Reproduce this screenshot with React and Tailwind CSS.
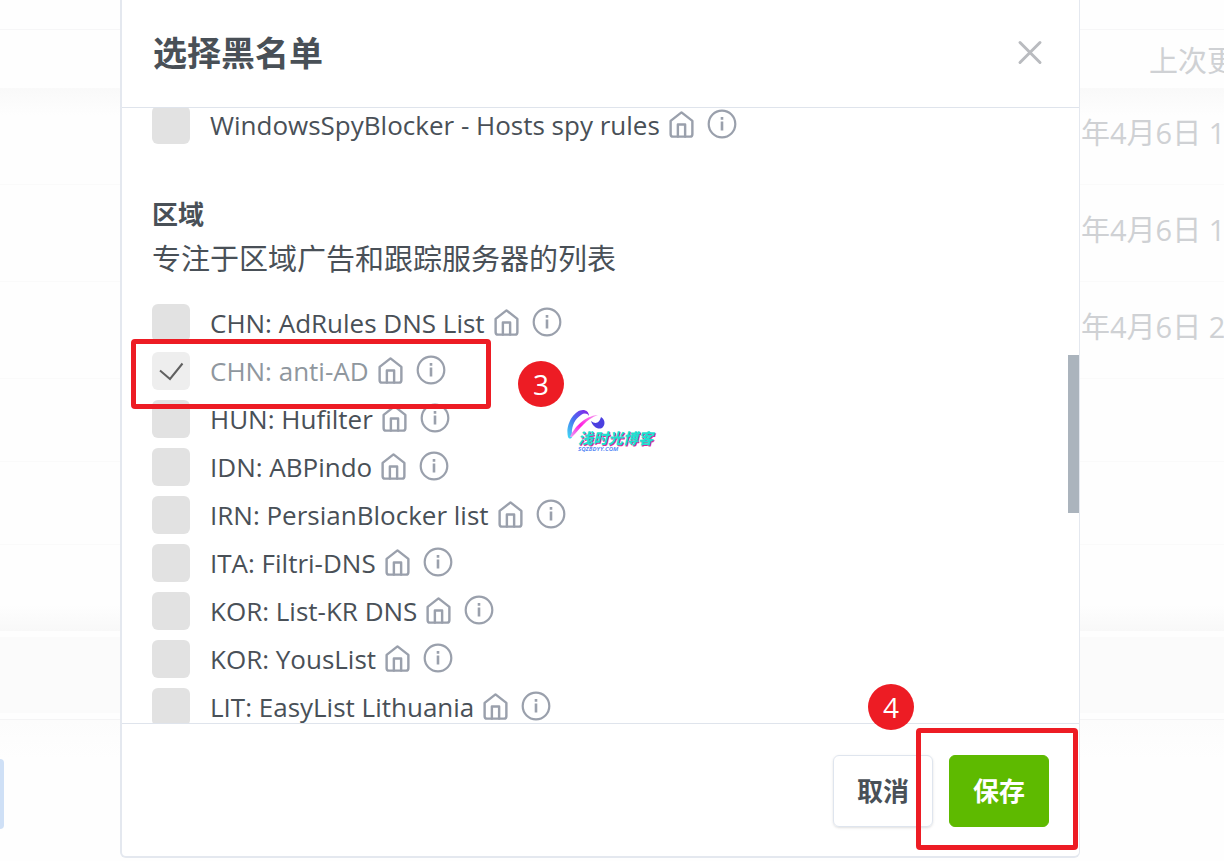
import React from "react";

const filters = [
  { name: "CHN: AdRules DNS List" },
  { name: "CHN: anti-AD", added: true },
  { name: "HUN: Hufilter" },
  { name: "IDN: ABPindo" },
  { name: "IRN: PersianBlocker list" },
  { name: "ITA: Filtri-DNS" },
  { name: "KOR: List-KR DNS" },
  { name: "KOR: YousList" },
  { name: "LIT: EasyList Lithuania" },
];

const dates = ["年4月6日 1", "年4月6日 1", "年4月6日 2"];

function HomeIcon() {
  return (
    <svg className="size-[29px]" viewBox="0 0 24 24" fill="none" stroke="currentColor" strokeWidth="2" strokeLinecap="round" strokeLinejoin="round">
      <path d="M3 9l9-7 9 7v11a2 2 0 0 1-2 2H5a2 2 0 0 1-2-2z" />
      <path d="M9 22V12h6v10" />
    </svg>
  );
}

function InfoIcon() {
  return (
    <svg className="size-[30px]" viewBox="0 0 30 30" fill="none" stroke="currentColor" strokeWidth="2.2">
      <circle cx="15" cy="15" r="13.3" />
      <path strokeWidth="2.6" d="M15 12.500v9M15 8v2.800" />
    </svg>
  );
}

function FilterRow({ id, name, added, first, children }) {
  return (
    <div className={first ? "flex h-9 items-end" : "relative flex h-12 items-center"}>
      <label htmlFor={id} className="flex h-[38px] items-center">
        <span className="grid size-[38px] shrink-0">
          <input
            id={id}
            type="checkbox"
            defaultChecked={added}
            disabled={added}
            className="col-start-1 row-start-1 size-[38px] appearance-none rounded-md bg-[#e2e2e2] disabled:bg-[#eeeeee]"
          />
          {added && (
            <svg className="col-start-1 row-start-1 size-[38px]" viewBox="0 0 38 38" fill="none" stroke="#606060" strokeWidth="2">
              <path d="M8 18.500l10 8.500L30.500 11.500" />
            </svg>
          )}
        </span>
        <span className={added ? "ml-5 text-[#8f979e]" : "ml-5 text-[#495057]"}>{name}</span>
      </label>
      <span className="ml-[7px] flex h-[38px] items-center gap-[11px] pb-[2px] text-[#9aa0ac]">
        <a href="#home" aria-label={name}>
          <HomeIcon />
        </a>
        <a href="#info" aria-label={name}>
          <InfoIcon />
        </a>
      </span>
      {children}
    </div>
  );
}

function Badge({ className, children }) {
  return (
    <span className={"absolute z-20 flex size-[46px] items-center justify-center rounded-full bg-[#ed1c24] text-[28px] text-white " + className}>
      {children}
    </span>
  );
}

function Watermark() {
  return (
    <div className="absolute left-[414px] top-[61px] z-10 w-[96px]">
      <svg className="h-[32px] w-[42px]" viewBox="0 0 42 32" fill="none">
        <defs>
          <linearGradient id="arc" x1="0" y1="1" x2="1" y2="0">
            <stop offset="0" stopColor="#3fe0f5" />
            <stop offset="0.5" stopColor="#4a6cf0" />
            <stop offset="1" stopColor="#8a1fe8" />
          </linearGradient>
          <linearGradient id="slash" x1="0" y1="1" x2="1" y2="0">
            <stop offset="0" stopColor="#e9a0f5" />
            <stop offset="0.45" stopColor="#ff1fe0" />
            <stop offset="1" stopColor="#f7a0f0" />
          </linearGradient>
        </defs>
        <path d="M2 29C-1 17 8 2 17 2c3 0 6 2 6 6-2-3-5-3-8-1C8 12 5 19 6 29c-1 2-3 2-4 0z" fill="url(#arc)" />
        <path d="M4 29C8 20 18 8 32 7 20 11 14 21 6 29z" fill="url(#slash)" />
        <path d="M25 13c4 3 8 3 10-4 5 3 4 9 1 11-4 2-9-1-11-7z" fill="#4b3fe0" />
      </svg>
      <p className="-mt-[10px] ml-3 whitespace-nowrap text-[15px] font-black italic leading-4 text-[#1fe0d0] [text-shadow:1px_1px_0_#e0259a]">浅时光博客</p>
      <p className="ml-3 text-[6px] font-bold italic leading-[6px] text-[#5b8cf5]">SQZBDYY.COM</p>
    </div>
  );
}

function Backdrop() {
  return (
    <div className="flex min-h-screen flex-col">
      <div className="h-[30px] border-b border-[#f6f6f7]" />
      <div className="flex h-[58px] items-center justify-end overflow-hidden pt-1">
        <p className="w-[75px] whitespace-nowrap text-[29px] text-[#cfd1d4]">上次更</p>
      </div>
      <div className="h-[543px] bg-linear-to-b from-[#f9f9f9] via-[#fefefe] via-5% to-[#fefefe]">
        {dates.map((d, i) => (
          <div key={i} className="flex h-[97px] items-center justify-end border-b border-[#fafafa] pb-[6px]">
            <p className="w-[143px] overflow-hidden whitespace-nowrap text-[29px] text-[#cfd1d4]">{d}</p>
          </div>
        ))}
        <div className="h-[83px] border-b border-[#fafafa]" />
        <div className="h-[83px] border-b border-[#fafafa]" />
        <div className="h-[86px] bg-linear-to-b from-[#fefefe] from-70% to-[#f8f8f8]" />
      </div>
      <div className="mt-[6px] h-[76px] bg-[#fbfbfb]" />
      <div className="mt-[6px] h-[40px] border-t border-[#f4f4f5] bg-linear-to-b from-[#fcfcfc] to-[#fefefe]" />
      <div className="h-[70px] w-1 rounded-r-md bg-[#cfe0f6]" />
    </div>
  );
}

export default function App() {
  return (
    <div className="relative h-screen overflow-hidden bg-[#fefefe] font-['Open_Sans','Noto_Sans_CJK_SC',sans-serif]">
      <Backdrop />
      <div className="absolute inset-0 flex pb-[3px] pl-[120px] pr-[144px]">
        <section role="dialog" aria-labelledby="title" className="flex min-w-0 flex-1 flex-col rounded-b-md border-2 border-r border-t-0 border-[#e4e8ef] bg-white">
          <header className="flex h-[108px] shrink-0 items-center justify-between border-b border-[#dfe4ec] px-[31px] pb-[2px]">
            <h1 id="title" className="pt-[2px] text-[34px] font-bold text-[#495057]">选择黑名单</h1>
            <button type="button" aria-label="Close" className="mr-1">
              <svg className="size-7" viewBox="0 0 28 28" stroke="#b9bbbf" strokeWidth="3" strokeLinecap="round">
                <path d="M4 3.500l20 20M24 3.500l-20 20" />
              </svg>
            </button>
          </header>

          <div className="relative min-h-0 flex-1 overflow-hidden px-[30px] text-[26px]">
            <FilterRow id="spy" name="WindowsSpyBlocker - Hosts spy rules" first />
            <h2 className="mt-[50px] font-bold leading-10 text-[#495057]">区域</h2>
            <p className="mb-[16px] text-[29px] leading-[49px] text-[#495057]">专注于区域广告和跟踪服务器的列表</p>
            {filters.map((f, i) => (
              <FilterRow key={f.name} id={"f" + i} name={f.name} added={f.added}>
                {f.added && (
                  <>
                    <span className="absolute -left-[21px] -top-[8px] z-10 h-[70px] w-[360px] rounded-sm border-[5px] border-[#ed1c24]" />
                    <Badge className="left-[366px] top-[14px]">3</Badge>
                    <Watermark />
                  </>
                )}
              </FilterRow>
            ))}
            <div className="absolute right-0 top-[247px] h-[158px] w-[11px] bg-[#abb4bd]" />
          </div>

          <footer className="relative flex shrink-0 justify-end gap-4 border-t border-[#dfe4ec] px-[30px] pb-[29px] pt-[31px] text-[26px] font-bold leading-[70px]">
            <Badge className="right-[165px] -top-[40px] font-normal">4</Badge>
            <button type="button" className="rounded-md border border-[#dfe5ee] px-[23px] text-[#495057] shadow-sm">取消</button>
            <button type="button" className="rounded-md border border-[#5eba00] bg-[#5eba00] px-[23px] text-white">保存</button>
            <span className="absolute right-px top-[4px] h-[122px] w-[162px] rounded-sm border-[5px] border-[#ed1c24]" />
          </footer>
        </section>
      </div>
    </div>
  );
}
